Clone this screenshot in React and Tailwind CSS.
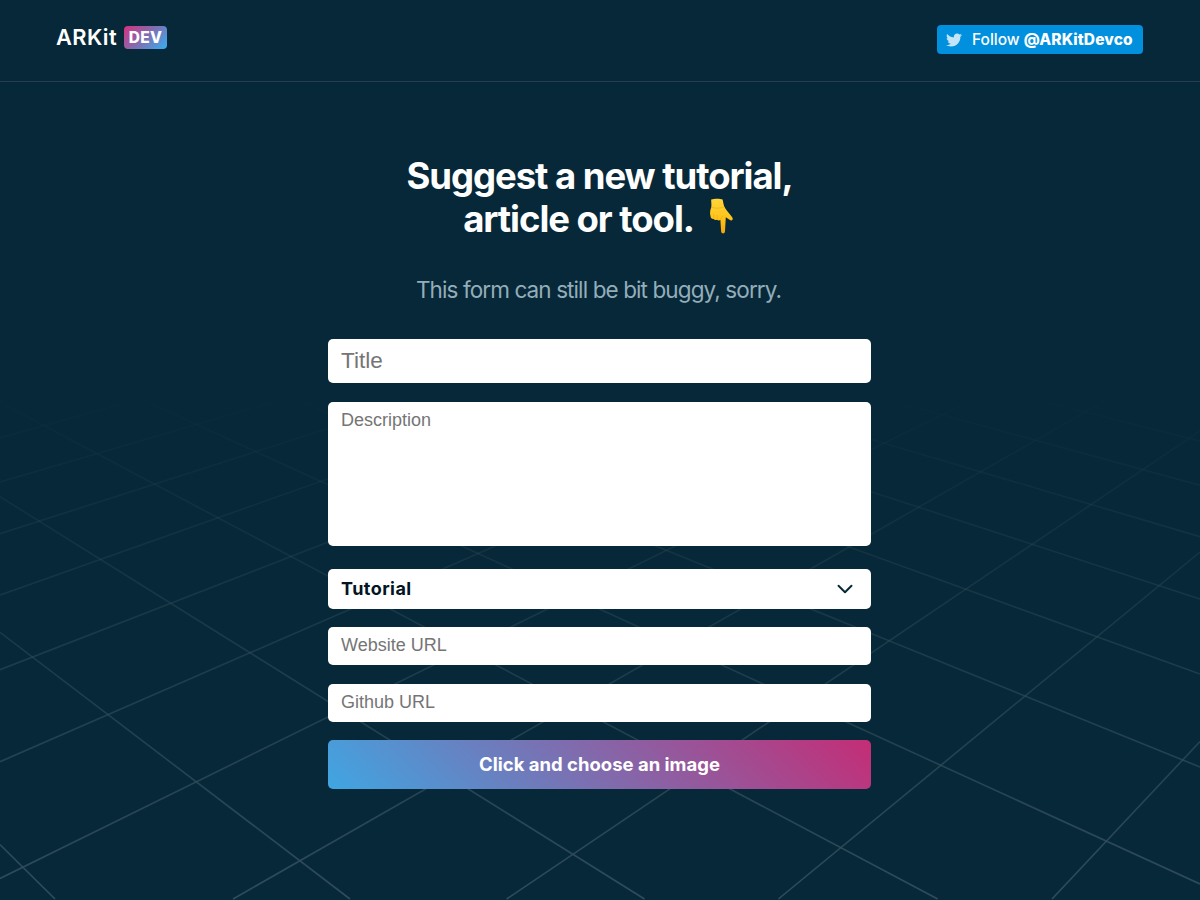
import { useState } from "react";
import { FaTwitter } from "react-icons/fa";
import { ChevronDown } from "lucide-react";

// Floor grid, one entry per line: [x1, y1, x2, y2]
const GRID_LINES = [
    // Running down to the right
    [0, 844.5, 55, 899],
    [0, 632.3, 350, 899],
    [0, 496.7, 644.5, 899],
    [0, 402.3, 937.7, 899],
    [143, 400, 1200, 884],
    [287, 396.3, 1200, 767],
    [440, 399, 1200, 674],
    [590, 400, 1200, 599],
    [735, 399, 1200, 536.7],
    [870, 395, 1200, 485.3],
    [1027, 397.3, 1200, 441],
    [1168, 395, 1200, 403],
    // Running up to the right
    [0, 437.8, 143, 398],
    [0, 482, 285, 398.5],
    [0, 533.7, 420, 399],
    [0, 595, 553, 399],
    [0, 669.7, 696, 399],
    [0, 761.7, 833, 399],
    [0, 878.5, 980, 396],
    [233, 899, 1108, 399],
    [506.7, 899, 1200, 431],
    [778.4, 899, 1200, 552],
    [1052, 899, 1200, 741.5],
];

function FloorGrid() {
    return (
        <svg
            className="absolute inset-0 -z-10"
            width="1200"
            height="900"
            viewBox="0 0 1200 900"
            fill="none"
            aria-hidden="true"
        >
            <defs>
                <linearGradient id="floor" gradientUnits="userSpaceOnUse" x1="0" y1="390" x2="0" y2="900">
                    <stop offset="0" stopColor="#2f4c5c" stopOpacity="0" />
                    <stop offset="1" stopColor="#2f4c5c" />
                </linearGradient>
            </defs>
            <g stroke="url(#floor)" strokeWidth="1.6">
                {GRID_LINES.map(([x1, y1, x2, y2], i) => (
                    <line key={i} x1={x1} y1={y1} x2={x2} y2={y2} />
                ))}
            </g>
        </svg>
    );
}

function PointingDown() {
    return (
        <svg className="ml-[14px] mr-[2px] inline-block align-top" width="26" height="37" viewBox="0 0 26 37">
            <defs>
                <linearGradient id="hand" x1="0" y1="0" x2="0" y2="1">
                    <stop offset="0" stopColor="#ffd53a" />
                    <stop offset="0.55" stopColor="#ffc41c" />
                    <stop offset="1" stopColor="#f5a40b" />
                </linearGradient>
            </defs>
            <path
                d="M3.2 1.6C6.5.6 12 .6 14.6 1.6c.7 2.6.8 4.9 1.8 7.2 1.2 2.8 4.7 6.4 7.8 10.4 1.5 2-.2 4-2.3 2.9l-4.1-2.9-.8 14c-.2 2.9-3.6 2.9-3.9 0l-.7-11.1c-1.2.7-2.6.5-3.4-.4-1.3.6-2.7.2-3.4-.8-1.6.2-2.9-.7-3-2.3-.8-3.2-.7-6.4.6-9.2.6-2.4-.2-5.5 0-7.8z"
                fill="url(#hand)"
            />
            <path
                d="M3.2 9.2c3.4 1.3 8.5 1.4 12.4-.2M5.6 20.9c.5-1.8.5-3.2 0-4.9M9 21.7c.5-1.8.4-3.2 0-4.8M12.4 22.1c.4-1.8 1.4-3.3 3.2-4.4"
                fill="none"
                stroke="#e79a0c"
                strokeOpacity="0.55"
                strokeWidth="0.8"
            />
        </svg>
    );
}

const fieldClass =
    "block w-full rounded-[5px] bg-white px-[13px] font-['Liberation_Sans',sans-serif] text-[#111] placeholder:text-[#757575] placeholder:opacity-100 outline-none";

export default function App() {
    const [category, setCategory] = useState("Tutorial");

    return (
        <div className="relative isolate h-[900px] w-full overflow-hidden bg-[#072838] font-['Inter',sans-serif] text-white">
            <FloorGrid />

            {/* Header */}
            <header className="flex h-[82px] items-start justify-between border-b border-[#24404f] px-[57px]">
                <a href="#" className="-ml-px mt-[26px] flex items-start">
                    <span className="w-[68px] text-[21.8px] font-semibold leading-[22px] tracking-[0.4px]">ARKit</span>
                    <span className="flex h-[23px] w-[43px] items-center justify-center rounded bg-linear-[135deg,#d8317c,#7f6fb4_50%,#36b0f0] text-[15.5px] font-extrabold tracking-[0.3px]">
                        DEV
                    </span>
                </a>
                <a
                    href="#"
                    className="mt-[25px] flex h-[29px] w-[206px] items-center rounded-[4px] bg-[#0090de] pl-[9px] text-[15.5px] font-medium whitespace-nowrap"
                >
                    <FaTwitter size={16} className="mr-[10px] text-[#c4e4f7]" />
                    <span>
                        Follow <b className="font-extrabold tracking-[0.1px]">@ARKitDevco</b>
                    </span>
                </a>
            </header>

            {/* Form */}
            <main className="mx-auto flex w-[544px] flex-col pt-[73px] pr-px">
                <h1 className="text-center text-[36.5px] leading-[43px] font-bold tracking-[-1.05px]">
                    Suggest a new tutorial,
                    <br />
                    article or tool.
                    <PointingDown />
                </h1>
                <p className="mt-[34px] pr-[2px] text-center text-[22.5px] leading-[30px] tracking-[-0.9px] text-[#93adba]">
                    This form can still be bit buggy, sorry.
                </p>

                <form className="mt-[34px] flex flex-col">
                    <input className={`${fieldClass} h-[44px] text-[22.5px]`} placeholder="Title" />
                    <textarea
                        className={`${fieldClass} mt-[19px] h-[144px] resize-none pt-[8px] text-[18px] leading-[21px]`}
                        placeholder="Description"
                    />
                    <div className="relative mt-[23px]">
                        <select
                            value={category}
                            onChange={(e) => setCategory(e.target.value)}
                            className="block h-[40px] w-full appearance-none rounded-[5px] bg-white px-[13px] pb-px text-[18px] font-bold tracking-[0.45px] text-[#04151f] outline-none"
                        >
                            <option>Tutorial</option>
                            <option>Article</option>
                            <option>Tool</option>
                        </select>
                        <ChevronDown
                            size={26}
                            strokeWidth={1.8}
                            className="pointer-events-none absolute top-[7px] right-[13px] text-[#072838]"
                        />
                    </div>
                    <input className={`${fieldClass} mt-[18px] h-[38px] pb-px text-[18px]`} placeholder="Website URL" />
                    <input className={`${fieldClass} mt-[19px] h-[38px] pb-px text-[18px]`} placeholder="Github URL" />
                    <button
                        type="button"
                        className="mt-[18px] h-[49px] rounded-[5px] bg-linear-[45deg,#3fa6e2,#c42d76] text-[18.5px] font-bold"
                    >
                        Click and choose an image
                    </button>
                </form>
            </main>
        </div>
    );
}
